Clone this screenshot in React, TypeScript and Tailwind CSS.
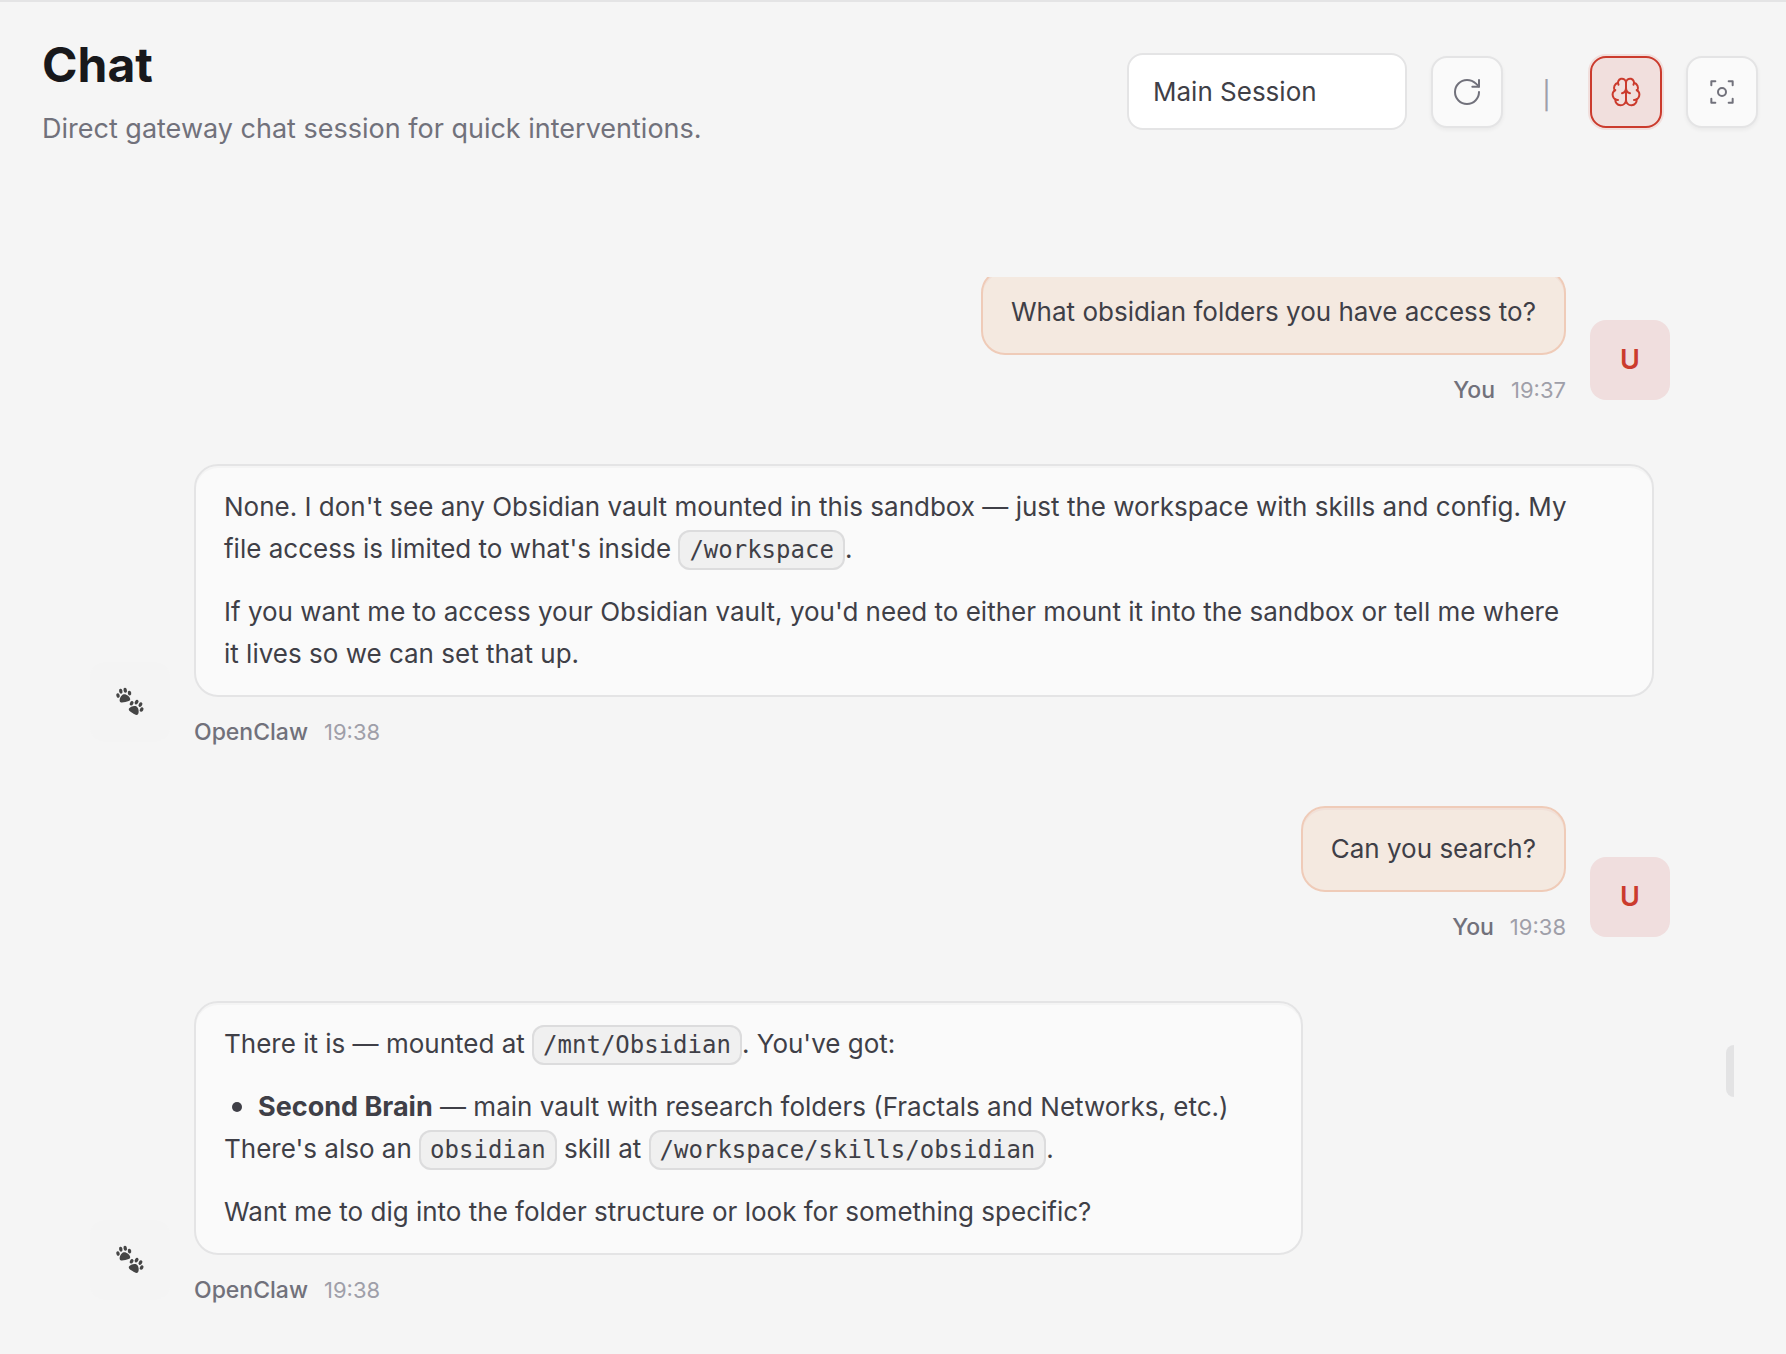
import {ReactNode, useState} from 'react';
import {Brain, RotateCw} from 'lucide-react';

interface IconButtonProps {
  label: string;
  active?: boolean;
  children: ReactNode;
}

function IconButton({label, active = false, children}: IconButtonProps) {
  return (
    <button
      type="button"
      aria-label={label}
      aria-pressed={active}
      className={
        active
          ? 'flex size-18 shrink-0 items-center justify-center rounded-2xl border-2 border-[#cb3b2d] bg-[#f1dfdd] text-[#cb3b2d] shadow-[0_0_0_2px_#f1dfdd]'
          : 'flex size-18 shrink-0 items-center justify-center rounded-2xl border-2 border-[#e4e4e5] bg-[#fafafa] text-zinc-500 shadow-[0_2px_4px_#0000000d]'
      }
    >
      {children}
    </button>
  );
}

function FocusIcon() {
  return (
    <svg
      viewBox="0 0 24 24"
      fill="none"
      stroke="currentColor"
      strokeWidth="1.5"
      strokeLinecap="round"
      strokeLinejoin="round"
      className="size-8"
      aria-hidden="true"
    >
      <path d="M4 7V4h3M20 7V4h-3M4 17v3h3M20 17v3h-3" />
      <circle cx="12" cy="12" r="3" />
    </svg>
  );
}

function Paw() {
  return (
    <>
      <ellipse cx="-6.2" cy="-1.2" rx="1.8" ry="2.5" />
      <ellipse cx="-2.4" cy="-5" rx="1.8" ry="2.6" />
      <ellipse cx="2.4" cy="-5" rx="1.8" ry="2.6" />
      <ellipse cx="6.2" cy="-1.2" rx="1.8" ry="2.5" />
      <path d="M0-1.2C2.6-1.2 5.8 2.6 5.6 5 5.4 7.2 2.4 7 0 7S-5.4 7.2-5.6 5C-5.8 2.6-2.6-1.2 0-1.2Z" />
    </>
  );
}

function PawsIcon() {
  return (
    <svg
      viewBox="0 0 32 32"
      fill="currentColor"
      className="size-8"
      aria-hidden="true"
    >
      <g transform="translate(10 9.4) rotate(-12) scale(.95)">
        <Paw />
      </g>
      <g transform="translate(22 21.4) rotate(32) scale(.95)">
        <Paw />
      </g>
    </svg>
  );
}

function Code({children}: {children: ReactNode}) {
  return (
    <code className="rounded-xl border-2 border-[#dcdcdd] bg-[#f0f0f0] px-[9px] py-1 font-['DejaVu_Sans_Mono',monospace] text-[24px]">
      {children}
    </code>
  );
}

interface MessageProps {
  time: string;
  children: ReactNode;
}

function UserMessage({time, children}: MessageProps) {
  return (
    <article className="flex items-end justify-end gap-6">
      <div className="flex flex-col items-end">
        <div className="rounded-3xl border-2 border-[#efcbb8] bg-[#f4e9e0] px-7 py-5 shadow-[inset_0_2px_0_#f1e0d8]">
          {children}
        </div>
        <Meta name="You" time={time} />
      </div>
      <div className="flex size-20 shrink-0 items-center justify-center rounded-2xl bg-[#f0dede] text-[27px] font-semibold text-[#cb3b2d]">
        U
      </div>
    </article>
  );
}

function AssistantMessage({time, children}: MessageProps) {
  return (
    <article className="mr-4 flex items-end gap-6">
      <div className="flex size-20 shrink-0 items-center justify-center rounded-2xl bg-[#f4f4f4] text-[#454545]">
        <PawsIcon />
      </div>
      <div className="flex min-w-0 flex-col items-start">
        <div className="space-y-5 rounded-3xl border-2 border-[#e4e4e5] bg-[#fafafa] py-5 pr-18 pl-7 shadow-[inset_0_2px_0_#f4f4f4]">
          {children}
        </div>
        <Meta name="OpenClaw" time={time} />
      </div>
    </article>
  );
}

function Meta({name, time}: {name: string; time: string}) {
  return (
    <div className="mt-6 flex h-[21px] items-center gap-4 text-[22px]">
      <span className="text-[23px] font-medium text-zinc-500">{name}</span>
      <time className="text-zinc-400">{time}</time>
    </div>
  );
}

export default function App() {
  const [session, setSession] = useState('main');

  return (
    <main className="relative flex min-h-screen flex-col border-t-2 border-[#e4e4e5] bg-[#f5f5f5] font-[Inter,sans-serif] text-[26px] leading-[42px] text-zinc-700">
      <header className="flex items-start justify-between pt-[38px] pr-7 pl-[42px]">
        <div>
          <h1 className="text-[48px] leading-[50px] font-bold text-zinc-900">
            Chat
          </h1>
          <p className="mt-[18px] text-[27px] text-zinc-500">
            Direct gateway chat session for quick interventions.
          </p>
        </div>
        <div className="mt-[13px] flex items-center gap-6">
          <select
            aria-label="Session"
            value={session}
            onChange={event => setSession(event.target.value)}
            className="h-[77px] w-70 appearance-none rounded-2xl border-2 border-[#e4e4e5] bg-white px-6"
          >
            <option value="main">Main Session</option>
          </select>
          <IconButton label="Refresh">
            <RotateCw className="size-8" strokeWidth={1.5} />
          </IconButton>
          <span className="w-[39px] pt-2 text-center text-[27px] text-zinc-400">
            |
          </span>
          <IconButton label="Toggle thinking" active>
            <Brain className="size-8" strokeWidth={1.5} />
          </IconButton>
          <IconButton label="Focus mode">
            <FocusIcon />
          </IconButton>
        </div>
      </header>

      <section
        aria-label="Messages"
        className="mt-[127px] overflow-hidden pr-29 pb-10 pl-[90px]"
      >
        <div className="-mt-2 space-y-16">
          <UserMessage time="19:37">
            <p>What obsidian folders you have access to?</p>
          </UserMessage>

          <AssistantMessage time="19:38">
            <p>
              None. I don't see any Obsidian vault mounted in this sandbox —
              just the workspace with skills and config. My file access is
              limited to what's inside <Code>/workspace</Code>.
            </p>
            <p>
              If you want me to access your Obsidian vault, you'd need to either
              mount it into the sandbox or tell me where it lives so we can set
              that up.
            </p>
          </AssistantMessage>

          <UserMessage time="19:38">
            <p>Can you search?</p>
          </UserMessage>

          <AssistantMessage time="19:38">
            <p>
              There it is — mounted at <Code>/mnt/Obsidian</Code>. You've got:
            </p>
            <div>
              <ul>
                <li className="flex items-center gap-4 pl-2 before:size-[10px] before:shrink-0 before:rounded-full before:bg-zinc-700">
                  <span>
                    <strong className="text-[27px] font-bold">
                      Second Brain
                    </strong>{' '}
                    — main vault with research folders (Fractals and Networks,
                    etc.)
                  </span>
                </li>
              </ul>
              <p>
                There's also an <Code>obsidian</Code> skill at{' '}
                <Code>/workspace/skills/obsidian</Code>.
              </p>
            </div>
            <p>
              Want me to dig into the folder structure or look for something
              specific?
            </p>
          </AssistantMessage>
        </div>
      </section>

      <div className="absolute top-[1043px] right-[52px] h-13 w-2 rounded-l-lg bg-[#e3e3e4]" />
    </main>
  );
}
